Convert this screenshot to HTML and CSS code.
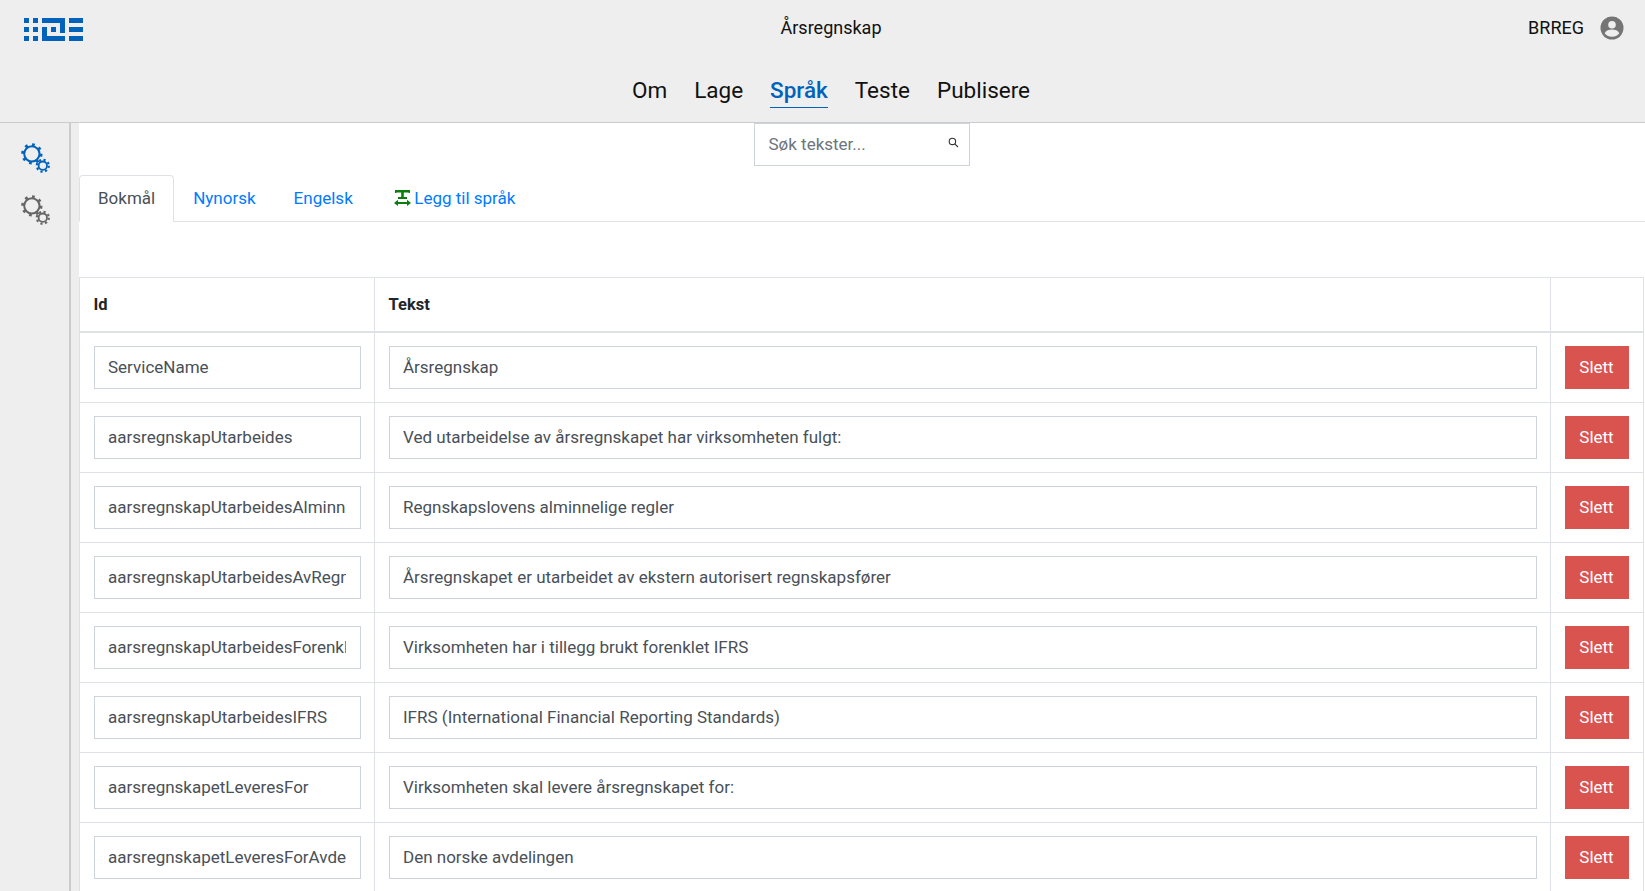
FILE: index.html
```html
<!DOCTYPE html>
<html lang="en">
<head>
  <meta charset="UTF-8">
  <title>Årsregnskap</title>
  <link rel="stylesheet" href="styles.css">
</head>
<body>
  <header class="topbar">
    <div class="topbar-row">
      <svg class="logo" width="60" height="24" viewBox="0 0 60 24" fill="#0062ba">
        <rect x="0" y="0" width="5" height="5"/><rect x="9" y="0" width="5" height="5"/>
        <rect x="0" y="9" width="5" height="5"/><rect x="9" y="9" width="5" height="5"/>
        <rect x="0" y="18" width="5" height="5"/><rect x="9" y="18" width="5" height="5"/>
        <path d="M18 0H41V15H36V5H18ZM18 9H23V18H41V23H18Z"/>
        <rect x="27" y="9" width="5" height="5"/>
        <rect x="45" y="0" width="14" height="5"/><rect x="45" y="9" width="14" height="5"/><rect x="45" y="18" width="14" height="5"/>
      </svg>
      <div class="app-title">Årsregnskap</div>
      <div class="user">
        <span>BRREG</span>
        <svg width="24" height="24" viewBox="0 0 24 24">
          <circle cx="12" cy="12" r="11.5" fill="#757575"/>
          <circle cx="12" cy="8.8" r="3.8" fill="#eee"/>
          <path d="M4.6 17.2C6 14.6 9 13.6 12 13.6S18 14.6 19.4 17.2C17.6 19.6 15 20.8 12 20.8S6.4 19.6 4.6 17.2Z" fill="#eee"/>
        </svg>
      </div>
    </div>
    <nav class="mainnav">
      <a href="#">Om</a>
      <a href="#">Lage</a>
      <a href="#" class="active">Språk</a>
      <a href="#">Teste</a>
      <a href="#">Publisere</a>
    </nav>
  </header>

  <div class="layout">
    <aside class="sidebar">
      <svg class="gears gears-blue" width="31" height="31" viewBox="0 0 34 34">
        <circle class="teeth" cx="13" cy="13" r="10.2" stroke-width="3" stroke-dasharray="3 5"/>
        <circle cx="13" cy="13" r="8.4" stroke-width="2.2"/>
        <circle class="teeth" cx="25" cy="26" r="6.6" stroke-width="2.4" stroke-dasharray="2.4 2.78"/>
        <circle cx="25" cy="26" r="4.6" stroke-width="2"/>
      </svg>
      <svg class="gears gears-grey" width="31" height="31" viewBox="0 0 34 34">
        <circle class="teeth" cx="13" cy="13" r="10.2" stroke-width="3" stroke-dasharray="3 5"/>
        <circle cx="13" cy="13" r="8.4" stroke-width="2.2"/>
        <circle class="teeth" cx="25" cy="26" r="6.6" stroke-width="2.4" stroke-dasharray="2.4 2.78"/>
        <circle cx="25" cy="26" r="4.6" stroke-width="2"/>
      </svg>
    </aside>

    <main class="content">
      <div class="search-row">
        <div class="search">
          <input type="text" placeholder="Søk tekster...">
          <svg width="11" height="11" viewBox="0 0 11 11" fill="none" stroke="#333" stroke-width="1.1">
            <circle cx="4.4" cy="4.4" r="3.2"/>
            <path d="M6.8 6.8L10 10"/>
          </svg>
        </div>
      </div>

      <ul class="tabs">
        <li><a href="#" class="active">Bokmål</a></li>
        <li><a href="#">Nynorsk</a></li>
        <li><a href="#">Engelsk</a></li>
        <li>
          <a href="#"><svg class="add-icon" width="17" height="16" viewBox="0 0 17 16" fill="#0a7d0a">
              <path d="M1 0H16V3H14.6V2.6H9.8V7H13V9H4V7H7.2V2.6H2.4V3H1Z"/>
              <path d="M0 13L4 9.8V12H13V9.8L17 13L13 16V14H4V16Z"/>
            </svg>Legg til språk</a>
        </li>
      </ul>

      <table class="texts">
        <colgroup>
          <col class="col-id">
          <col class="col-text">
          <col class="col-action">
        </colgroup>
        <thead>
          <tr>
            <th>Id</th>
            <th>Tekst</th>
            <th></th>
          </tr>
        </thead>
        <tbody>
          <tr>
            <td><input type="text" value="ServiceName"></td>
            <td><input type="text" value="Årsregnskap"></td>
            <td><button>Slett</button></td>
          </tr>
          <tr>
            <td><input type="text" value="aarsregnskapUtarbeides"></td>
            <td><input type="text" value="Ved utarbeidelse av årsregnskapet har virksomheten fulgt:"></td>
            <td><button>Slett</button></td>
          </tr>
          <tr>
            <td><input type="text" value="aarsregnskapUtarbeidesAlminneligeRegler"></td>
            <td><input type="text" value="Regnskapslovens alminnelige regler"></td>
            <td><button>Slett</button></td>
          </tr>
          <tr>
            <td><input type="text" value="aarsregnskapUtarbeidesAvRegnskapsforer"></td>
            <td><input type="text" value="Årsregnskapet er utarbeidet av ekstern autorisert regnskapsfører"></td>
            <td><button>Slett</button></td>
          </tr>
          <tr>
            <td><input type="text" value="aarsregnskapUtarbeidesForenklet"></td>
            <td><input type="text" value="Virksomheten har i tillegg brukt forenklet IFRS"></td>
            <td><button>Slett</button></td>
          </tr>
          <tr>
            <td><input type="text" value="aarsregnskapUtarbeidesIFRS"></td>
            <td><input type="text" value="IFRS (International Financial Reporting Standards)"></td>
            <td><button>Slett</button></td>
          </tr>
          <tr>
            <td><input type="text" value="aarsregnskapetLeveresFor"></td>
            <td><input type="text" value="Virksomheten skal levere årsregnskapet for:"></td>
            <td><button>Slett</button></td>
          </tr>
          <tr>
            <td><input type="text" value="aarsregnskapetLeveresForAvdeling"></td>
            <td><input type="text" value="Den norske avdelingen"></td>
            <td><button>Slett</button></td>
          </tr>
        </tbody>
      </table>
    </main>
  </div>
</body>
</html>
```

FILE: styles.css
```css
html, body {
  height: 100%;
}
body {
  margin: 0;
  overflow: hidden;
  font-family: Roboto, "Liberation Sans", sans-serif;
  font-size: 18px;
  line-height: 1.5;
  color: #212529;
  background: #eee;
}
a {
  text-decoration: none;
}

.topbar {
  height: 122px;
  box-sizing: content-box;
  background: #eee;
  border-bottom: 1px solid #ccc;
}
.topbar-row {
  height: 56px;
  padding: 0 21px 0 24px;
  display: flex;
  align-items: center;
  justify-content: space-between;
  position: relative;
}
.logo {
  margin-top: 3px;
}
.app-title {
  position: absolute;
  left: 17px;
  right: 0;
  top: 14px;
  text-align: center;
  color: #111;
  pointer-events: none;
}
.user {
  display: flex;
  align-items: center;
  gap: 16px;
  color: #111;
}
.user span {
  margin-top: -1px;
}
.mainnav {
  display: flex;
  justify-content: center;
  gap: 27px;
  font-size: 22.5px;
  line-height: 32px;
  padding: 18px 0 0 17px;
}
.mainnav a {
  color: #111;
  display: block;
  height: 34px;
}
.mainnav a.active {
  color: #0062ba;
  font-weight: 500;
  height: 33px;
  border-bottom: 1px solid #0062ba;
}

.layout {
  display: flex;
  height: calc(100% - 123px);
}
.sidebar {
  width: 71px;
  flex-shrink: 0;
  border-right: 2px solid #ccc;
  padding: 19px 0 0 20px;
  box-sizing: border-box;
  display: flex;
  flex-direction: column;
  gap: 21px;
  align-items: flex-start;
}
.gears {
  fill: none;
}
.gears-blue {
  stroke: #0062ba;
}
.gears-grey {
  stroke: #666;
}
.content {
  flex: 1;
  margin-left: 8px;
  background: #fff;
  min-width: 0;
  font-size: 17px;
}

.search-row {
  display: flex;
  padding-left: 675px;
}
.search {
  position: relative;
  width: 216px;
}
.search input {
  width: 100%;
  height: 43px;
  box-sizing: border-box;
  padding: 0 13.5px 1px;
  border: 1px solid #ced4da;
  font: inherit;
  color: #495057;
  outline: none;
}
.search input::placeholder {
  color: #6c757d;
}
.search svg {
  position: absolute;
  top: 14px;
  right: 11px;
}

.tabs {
  list-style: none;
  margin: 9px 0 55px;
  padding: 0;
  display: flex;
  border-bottom: 1px solid #dee2e6;
}
.tabs li {
  margin-bottom: -1px;
}
.tabs a {
  display: block;
  padding: 9px 18px;
  height: 27px;
  line-height: 27px;
  border: 1px solid transparent;
  color: #007bff;
}
.tabs a.active {
  color: #495057;
  background: #fff;
  border-color: #dee2e6 #dee2e6 #fff;
  border-radius: 4px 4px 0 0;
}
.add-icon {
  vertical-align: -2px;
  margin: 0 3.5px 0 3px;
}

.texts {
  width: 1565px;
  table-layout: fixed;
  border-collapse: collapse;
}
.col-id {
  width: 295px;
}
.col-action {
  width: 93px;
}
.texts th,
.texts td {
  border: 1px solid #dee2e6;
  padding: 13px 13.5px;
  text-align: left;
}
.texts th {
  font-size: 16.5px;
  font-weight: 700;
  line-height: 27px;
  border-bottom-width: 2px;
}
.texts td {
  height: 43px;
  line-height: 27px;
}
.texts input {
  display: block;
  width: 100%;
  height: 43px;
  box-sizing: border-box;
  padding: 0 13.5px 1px;
  border: 1px solid #ced4da;
  font: inherit;
  color: #495057;
  background: #fff;
  outline: none;
}
.texts button {
  display: block;
  width: 64px;
  height: 43px;
  padding: 0;
  border: none;
  background: #d9534f;
  color: #fff;
  font: inherit;
  cursor: pointer;
}
```
